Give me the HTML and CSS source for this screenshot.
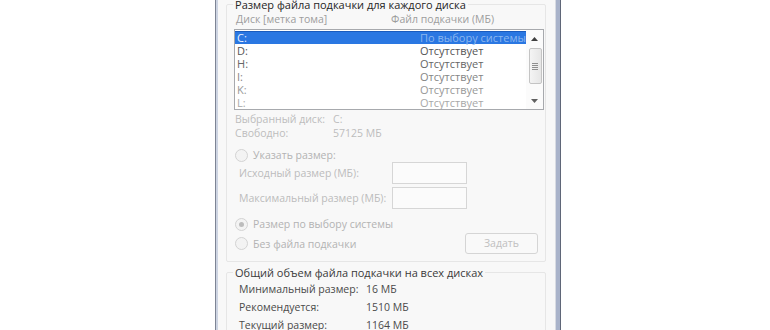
FILE: index.html
```html
<!DOCTYPE html>
<html lang="ru">
<head>
<meta charset="utf-8">
<link rel="stylesheet" href="styles.css">
</head>
<body>
<div class="window">
  <div class="frame-l"></div>
  <div class="panel">
    <fieldset class="group g1">
      <legend>Размер файла подкачки для каждого диска</legend>
      <div class="cols"><span class="c1">Диск [метка тома]</span><span>Файл подкачки (МБ)</span></div>
      <div class="list">
        <div class="rows">
          <div class="row sel"><span class="c1">C:</span><span class="v">По выбору системы</span></div>
          <div class="row r2"><span class="c1">D:</span><span>Отсутствует</span></div>
          <div class="row r3"><span class="c1">H:</span><span>Отсутствует</span></div>
          <div class="row r4"><span class="c1">I:</span><span>Отсутствует</span></div>
          <div class="row r5"><span class="c1">K:</span><span>Отсутствует</span></div>
          <div class="row r6"><span class="c1">L:</span><span>Отсутствует</span></div>
        </div>
        <div class="sb">
          <div class="sb-btn"><svg width="7" height="4" viewBox="0 0 7 4"><path d="M0 4 L3.5 0 L7 4 Z" fill="#404040"/></svg></div>
          <div class="sb-track">
            <div class="thumb"><span></span><span></span><span></span><span></span></div>
          </div>
          <div class="sb-btn"><svg width="7" height="4" viewBox="0 0 7 4"><path d="M0 0 L3.5 4 L7 0 Z" fill="#606060"/></svg></div>
        </div>
      </div>
      <div class="info">
        <div class="kv"><span class="k">Выбранный диск:</span><span>C:</span></div>
        <div class="kv"><span class="k">Свободно:</span><span>57125 МБ</span></div>
      </div>
      <div class="opt first"><span class="radio"></span><span>Указать размер:</span></div>
      <div class="sizes">
        <div class="size-row"><span class="k">Исходный размер (МБ):</span><span class="input"></span></div>
        <div class="size-row"><span class="k">Максимальный размер (МБ):</span><span class="input"></span></div>
      </div>
      <div class="opt sys"><span class="radio on"></span><span>Размер по выбору системы</span></div>
      <div class="opt-row">
        <div class="opt"><span class="radio"></span><span>Без файла подкачки</span></div>
        <div class="btn">Задать</div>
      </div>
    </fieldset>
    <fieldset class="group g2">
      <legend>Общий объем файла подкачки на всех дисках</legend>
      <div class="totals">
        <div class="kv"><span class="k">Минимальный размер:</span><span>16 МБ</span></div>
        <div class="kv"><span class="k">Рекомендуется:</span><span>1510 МБ</span></div>
        <div class="kv"><span class="k">Текущий размер:</span><span>1164 МБ</span></div>
      </div>
    </fieldset>
  </div>
  <div class="frame-r"></div>
</div>
</body>
</html>
```

FILE: styles.css
```css
html, body {
  margin: 0;
  padding: 0;
  background: #ffffff;
  overflow: hidden;
}
body {
  width: 770px;
  height: 330px;
  font-family: "Open Sans", "Liberation Sans", sans-serif;
  font-size: 10.5px;
  color: #3a3a3a;
  white-space: nowrap;
}
.window {
  display: flex;
  width: 346px;
  height: 360px;
  margin: -10px 0 0 215px;
}
.frame-l {
  width: 3px;
  border-left: 1px solid #7d8494;
  background: #cdd4e2;
}
.frame-r {
  width: 6px;
  border-left: 1px solid #d8dbe2;
  border-right: 1px solid #5f6678;
  background: #a9b3ca;
}
.panel {
  flex: 1;
  background: #f8f8f8;
  padding: 7px 9px 0 8px;
}
.group {
  margin: 0;
  padding: 0 1px 0 7px;
  border: 1px solid #e6e6e6;
  border-radius: 2px;
  min-width: 0;
}
.group legend {
  padding: 0 2px;
  margin-left: -1px;
  line-height: 15px;
  font-size: 11px;
  color: #262626;
}
.g2 legend {
  color: #3a3a3a;
}
.g1 {
  padding-bottom: 7px;
}
.cols {
  display: flex;
  height: 14px;
  line-height: 14px;
  color: #9d9d9d;
  padding-left: 2px;
}
.cols .c1 { width: 155px; }
.list {
  margin-top: 3px;
  height: 79px;
  border: 1px solid #a7a9ad;
  background: #ffffff;
  display: flex;
  font-size: 11px;
}
.rows {
  flex: 1;
  padding-top: 1px;
}
.row {
  display: flex;
  height: 13px;
  line-height: 13px;
  padding-left: 2px;
}
.row .c1 { width: 183px; flex: none; }
.row.sel {
  background: #2a77e2;
  box-shadow: inset 0 1px 0 #1a5bbd;
  color: #eaf2ff;
}
.row.sel .v { color: #8bb6ef; }
.r2 { color: #555555; }
.r3 { color: #666666; }
.r4 { color: #858585; }
.r5 { color: #989898; }
.r6 { color: #a8a8a8; }
.sb {
  width: 17px;
  display: flex;
  flex-direction: column;
  background: #fbfbfb;
}
.sb-btn {
  height: 17px;
  display: flex;
  align-items: center;
  justify-content: center;
}
.sb-track {
  flex: 1;
  padding: 1px 1px 0 3px;
}
.thumb {
  height: 34px;
  border: 1px solid #c4c4c4;
  border-radius: 2px;
  background: linear-gradient(to right, #f4f4f4, #e6e6e6);
  display: flex;
  flex-direction: column;
  align-items: center;
  justify-content: center;
  gap: 1px;
}
.thumb span {
  width: 6px;
  height: 1px;
  background: #8e8e8e;
}
.kv {
  display: flex;
}
.kv .k {
  flex: none;
}
.info {
  margin-top: 2px;
  padding-left: 1px;
  line-height: 14px;
  color: #bdbdbd;
}
.info .k { width: 98px; }
.opt {
  display: flex;
  align-items: center;
  height: 14px;
  color: #b3b3b3;
}
.opt.first {
  margin-top: 8px;
  padding-left: 1px;
}
.radio {
  width: 11px;
  height: 11px;
  border: 1px solid #d3d3d3;
  border-radius: 50%;
  background: #f3f3f3;
  margin-right: 5px;
  display: flex;
  align-items: center;
  justify-content: center;
}
.radio.on::after {
  content: "";
  width: 5px;
  height: 5px;
  border-radius: 50%;
  background: #bcbcbc;
}
.sizes {
  display: flex;
  flex-direction: column;
  gap: 3px;
  padding-left: 5px;
  color: #bcbcbc;
}
.size-row {
  display: flex;
  align-items: center;
  height: 22px;
}
.size-row .k {
  width: 153px;
  flex: none;
}
.input {
  width: 73px;
  height: 20px;
  border: 1px solid #d6d6d6;
  background: #fbfbfb;
}
.opt.sys {
  margin-top: 8px;
  padding-left: 1px;
}
.opt-row {
  margin-top: 2px;
  display: flex;
  align-items: center;
  justify-content: space-between;
  padding-left: 1px;
  padding-right: 6px;
}
.btn {
  width: 71px;
  height: 19px;
  border: 1px solid #d5d5d5;
  border-radius: 3px;
  background: #f9f9f9;
  color: #c0c0c0;
  text-align: center;
  line-height: 19px;
}
.g2 {
  margin-top: 3px;
  height: 80px;
}
.totals {
  padding-left: 5px;
  color: #4a4a4a;
}
.totals .kv {
  height: 18px;
  align-items: center;
}
.totals .k { width: 127px; }
```
